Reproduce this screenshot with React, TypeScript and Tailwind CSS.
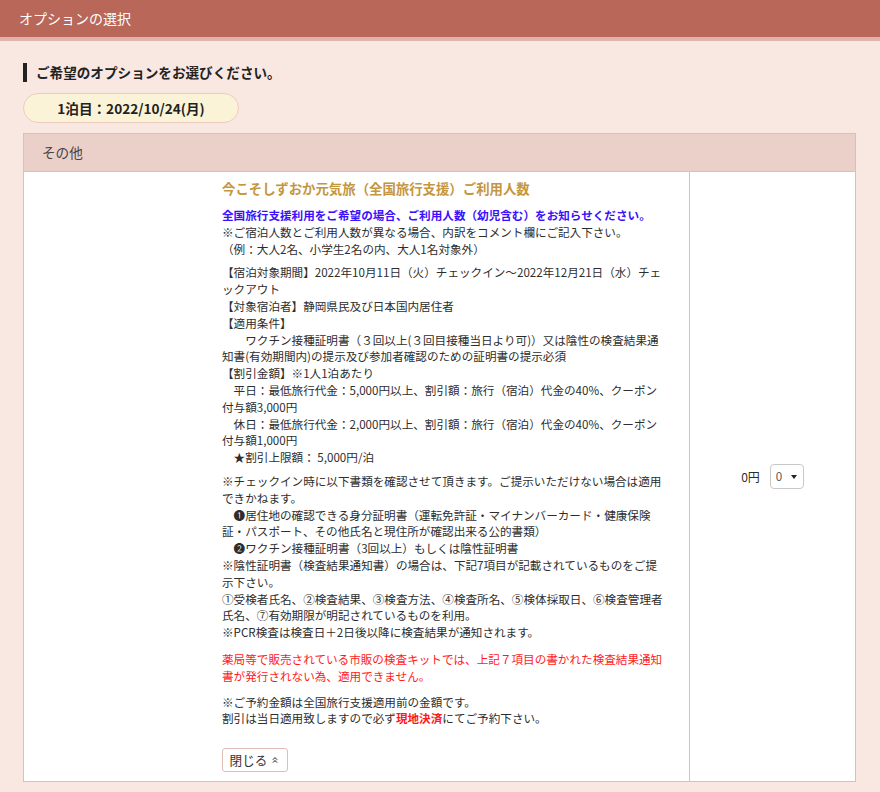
import { ChevronsUp } from "lucide-react";

const font = { fontFamily: '"Noto Sans CJK JP", "Noto Sans", sans-serif' };

function Lines({ lines, className = "" }: { lines: string[]; className?: string }) {
  return (
    <p className={`whitespace-pre leading-[16.8px] ${className}`}>
      {lines.map((l, i) => (
        <span key={i} className="block">
          {l}
        </span>
      ))}
    </p>
  );
}

const conditions = [
  "【宿泊対象期間】2022年10月11日（火）チェックイン～2022年12月21日（水）チェ",
  "ックアウト",
  "【対象宿泊者】静岡県民及び日本国内居住者",
  "【適用条件】",
  "　　ワクチン接種証明書（３回以上(３回目接種当日より可)）又は陰性の検査結果通",
  "知書(有効期間内)の提示及び参加者確認のための証明書の提示必須",
  "【割引金額】※1人1泊あたり",
  "　平日：最低旅行代金：5,000円以上、割引額：旅行（宿泊）代金の40%、クーポン",
  "付与額3,000円",
  "　休日：最低旅行代金：2,000円以上、割引額：旅行（宿泊）代金の40%、クーポン",
  "付与額1,000円",
  "　★割引上限額： 5,000円/泊",
];

const checkin = [
  "※チェックイン時に以下書類を確認させて頂きます。ご提示いただけない場合は適用",
  "できかねます。",
  "　❶居住地の確認できる身分証明書（運転免許証・マイナンバーカード・健康保険",
  "証・パスポート、その他氏名と現住所が確認出来る公的書類）",
  "　❷ワクチン接種証明書（3回以上）もしくは陰性証明書",
  "※陰性証明書（検査結果通知書）の場合は、下記7項目が記載されているものをご提",
  "示下さい。",
  "①受検者氏名、②検査結果、③検査方法、④検査所名、⑤検体採取日、⑥検査管理者",
  "氏名、⑦有効期限が明記されているものを利用。",
  "※PCR検査は検査日＋2日後以降に検査結果が通知されます。",
];

export default function App() {
  return (
    <div style={font} className="min-h-[792px] w-[880px] bg-[#f9e8e1] text-[#2d2d2d]">
      <div className="flex h-[37px] items-center bg-[#b86759] pl-[19px] text-[14px] text-white">
        オプションの選択
      </div>
      <div className="h-[4px] bg-[#e0b3ad]" />

      <div className="px-[23px] pt-[22px]">
        <h2 className="border-l-4 border-[#222] pl-[9px] text-[13.6px] font-bold leading-[19px] text-[#222]">
          ご希望のオプションをお選びください。
        </h2>

        <div className="mt-[11px] flex h-[30px] w-[216px] items-center justify-center rounded-full border border-[#ecccbf] bg-[#faf3d8] text-[13.6px] font-bold text-[#222]">
          1泊目：2022/10/24(月)
        </div>

        <div className="mt-[10px] w-[833px] border border-[#e0bcb5]">
          <div className="flex h-[38px] items-center border-b border-[#e0bcb5] bg-[#ebcfc9] pl-[18px] text-[13.6px] text-[#444]">
            その他
          </div>
          <div className="flex bg-white">
            <div className="w-[186px] shrink-0" />
            <div className="w-[479px] shrink-0 pl-[12px] pt-[6px] pb-[9px] text-[11.6px]">
              <h3 className="mb-[9px] text-[13.4px] font-bold leading-[20px] text-[#c4963e]">
                今こそしずおか元気旅（全国旅行支援）ご利用人数
              </h3>
              <div className="leading-[16.8px]">
                <span className="block font-bold text-[#3a10ff]">
                  全国旅行支援利用をご希望の場合、ご利用人数（幼児含む）をお知らせください。
                </span>
                <span className="block">※ご宿泊人数とご利用人数が異なる場合、内訳をコメント欄にご記入下さい。</span>
                <span className="block">（例：大人2名、小学生2名の内、大人1名対象外）</span>
              </div>
              <Lines lines={conditions} className="mt-[7px]" />
              <Lines lines={checkin} className="mt-[7px]" />
              <Lines
                className="mt-[10px] text-[#ff1a1a]"
                lines={[
                  "薬局等で販売されている市販の検査キットでは、上記７項目の書かれた検査結果通知",
                  "書が発行されない為、適用できません。",
                ]}
              />
              <div className="mt-[9px] leading-[16.8px]">
                <span className="block">※ご予約金額は全国旅行支援適用前の金額です。</span>
                <span className="block">
                  割引は当日適用致しますので必ず
                  <span className="font-bold text-[#ff1a1a]">現地決済</span>
                  にてご予約下さい。
                </span>
              </div>
              <button
                type="button"
                className="mt-[21px] flex h-[24px] w-[66px] items-center justify-center gap-[3px] rounded-[3px] border border-[#e0bdb6] bg-white text-[12.6px] text-[#333]"
              >
                閉じる
                <ChevronsUp className="h-[10px] w-[10px] text-[#777]" strokeWidth={2.5} />
              </button>
            </div>
            <div className="flex flex-1 items-center justify-center gap-[10px] border-l border-[#e0bcb5] text-[12px]">
              <span>0円</span>
              <div className="flex h-[25px] w-[34px] items-center justify-between rounded-[4px] border border-[#c8c8c8] pl-[5px] pr-[6px] text-[#555]">
                <span className="text-[11.6px]">0</span>
                <span className="h-0 w-0 border-x-[3px] border-t-[4px] border-x-transparent border-t-[#222]" />
              </div>
            </div>
          </div>
        </div>
      </div>
    </div>
  );
}
